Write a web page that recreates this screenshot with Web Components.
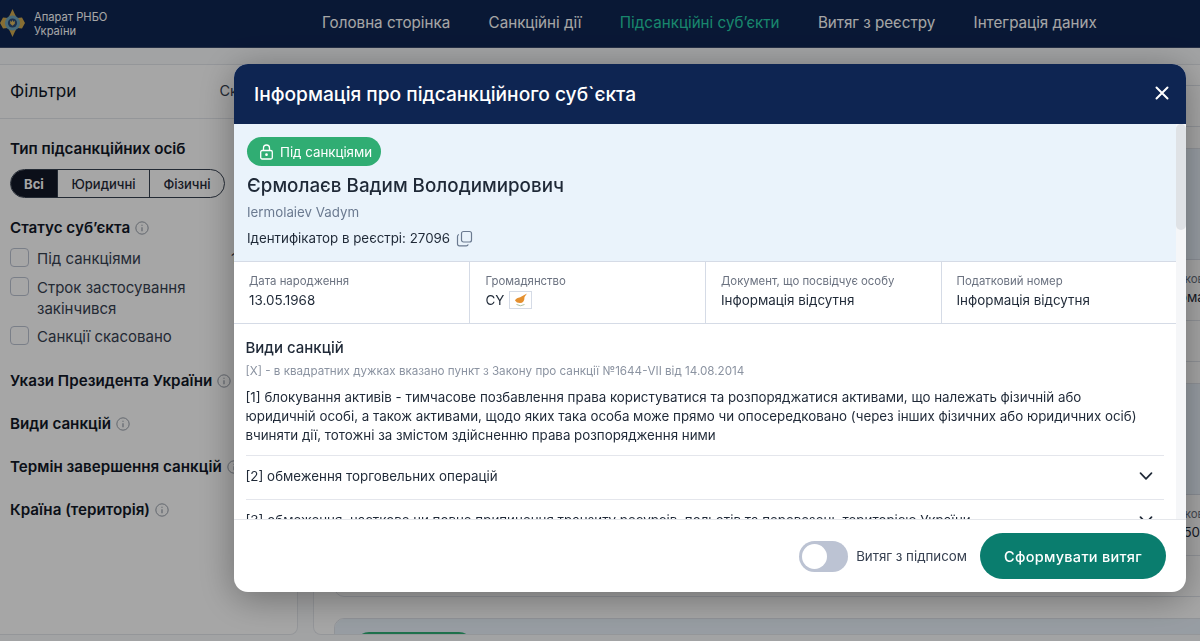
<!DOCTYPE html>
<html lang="uk"><head><meta charset="utf-8">
<style>
html,body{margin:0;height:641px;overflow:hidden;background:#f9fafc;font-family:Inter,"Noto Sans",sans-serif;color:#1f2937}
</style></head><body>
<app-header></app-header>
<app-page></app-page>
<dialog-overlay>
<subject-modal></subject-modal>
</dialog-overlay>
<script>
function def(name,html){customElements.define(name,class extends HTMLElement{constructor(){super();this.attachShadow({mode:'open'}).innerHTML=html;}})}
const chev='<svg width="16" height="16" viewBox="0 0 16 16" fill="none" stroke="#1f2937" stroke-width="1.7" stroke-linecap="round" stroke-linejoin="round"><path d="M2.5 5.2 8 10.8l5.5-5.6"/></svg>';
const info='<svg width="14" height="14" viewBox="0 0 15 15" fill="none" stroke="#8f97a3" style="margin-left:5px;flex:none"><circle cx="7.5" cy="7.5" r="6.6"/><path d="M7.5 6.6v4.4M7.5 4v1.2" stroke-width="1.2"/></svg>';

def('app-header',`<style>
:host{display:flex;align-items:center;height:48px;background:#0e2552;box-sizing:border-box;border-bottom:1px solid #3a4a6c}
.logo{display:flex;align-items:center;width:322px;box-sizing:border-box;gap:9px;flex:none}
.t{font-size:11.2px;line-height:14px;color:#fff;white-space:nowrap}
nav{display:flex;gap:38.3px;font-size:15.2px;color:#fff;white-space:nowrap;margin-top:-2px}
.a{color:#26d0a8}
svg{flex:none;margin-top:-2px}
</style>
<div class="logo"><svg width="25" height="28" viewBox="0 0 25 28">
<path d="M12.500 0 15 5.500 17 9l5-.5L25 14l-3 5.500-5-.5-2 3.500L12.500 28 10 22.500 8 19l-5 .5L0 14l3-5.500L8 9l2-3.500z" fill="#d0a94f"/>
<circle cx="12.500" cy="14" r="7.600" fill="#6ea5bd"/><circle cx="12.500" cy="14" r="4.600" fill="#2a4a78"/>
<path d="M10.200 11.500v3.200l2.300 2 2.300-2v-3.200l-1.300 1.500-1-2-1 2z" fill="#e0bb60"/></svg>
<div class="t">Апарат РНБО<br>України</div></div>
<nav><span>Головна сторінка</span><span>Санкційні дії</span><span class="a">Підсанкційні суб’єкти</span><span>Витяг з реєстру</span><span>Інтеграція даних</span></nav>`);

def('filter-title',`<style>:host{display:flex;align-items:center;font-size:15.2px;line-height:18px;font-weight:600;color:#111827;white-space:nowrap}</style><slot></slot>`);
def('check-row',`<style>:host{display:flex;gap:8px;font-size:15px;line-height:21px;color:#374151}
i{width:19px;height:19px;box-sizing:border-box;border:1.5px solid #bcc3d2;border-radius:4px;flex:none;background:#fff}
.n{margin-left:auto;margin-right:50px}</style><i></i><span><slot></slot></span><span class="n"><slot name="n"></slot></span>`);
def('type-switch',`<style>:host{display:flex;height:29px;width:215px;box-sizing:border-box;border:1px solid #374151;border-radius:15px;overflow:hidden;font-size:13px;font-weight:500;color:#1f2937}
span{display:flex;align-items:center;justify-content:center;border-left:1px solid #374151;white-space:nowrap}
.on{background:#111827;color:#fff;font-weight:700;border:0;width:46px;flex:none}.m{width:91px;flex:none}.e{flex:1}</style>
<span class="on">Всі</span><span class="m">Юридичні</span><span class="e">Фізичні</span>`);

def('filter-side',`<style>
:host{display:block;width:298px;height:571px;flex:none;box-sizing:border-box;background:#fff;border:1px solid #e4e7ec;border-left:0;border-radius:0 8px 8px 0;overflow:hidden}
.h{display:flex;justify-content:space-between;align-items:center;height:54px;padding:0 10px 2px;box-sizing:border-box;border-bottom:1px solid #e4e7ec;font-size:17.2px;white-space:nowrap}
.h b{font-weight:400;color:#111827}.h span{font-size:14.5px;color:#374151;margin-right:8px}
.b{padding:0 10px;display:flex;flex-direction:column}
.l{display:flex;flex-direction:column}
</style>
<div class="h"><b>Фільтри</b><span>Скинути</span></div>
<div class="b">
<filter-title style="margin-top:21px">Тип підсанкційних осіб</filter-title>
<type-switch style="margin-top:11px"></type-switch>
<filter-title style="margin-top:21px">Статус суб’єкта ${info}</filter-title>
<div class="l" style="gap:7.5px;margin-top:11px">
<check-row>Під санкціями<span slot="n">1</span></check-row>
<check-row>Строк застосування<br>закінчився</check-row>
<check-row>Санкції скасовано</check-row></div>
<filter-title style="margin-top:25px">Укази Президента України ${info}</filter-title>
<filter-title style="margin-top:25px">Види санкцій ${info}</filter-title>
<filter-title style="margin-top:25px">Термін завершення санкцій ${info}</filter-title>
<filter-title style="margin-top:25px">Країна (територія) ${info}</filter-title>
</div>`);

def('result-card',`<style>:host{display:block;width:1000px;height:214px;flex:none;background:#fff;border:1px solid #dfe3ea;border-radius:10px;box-sizing:border-box;overflow:hidden;font-size:13.4px;color:#1f2937}
.hero{height:111px;box-sizing:border-box;background:#e9f2fb;border-bottom:1px solid #d5dbe6;padding:13px 20px}
.cells{height:61px;box-sizing:border-box;border-bottom:1px solid #dfe3ea;padding:12px 0 0 815px}
.l{font-size:11.5px;line-height:14px;color:#6b7280;white-space:nowrap}.v{line-height:18px;margin-top:2px;white-space:nowrap}
::slotted([slot=pill]){display:block;width:118px;height:28px;background:#2fae74;border-radius:14px}
</style><div class="hero"><slot name="pill"></slot></div>
<div class="cells"><div class="l"><slot name="label"></slot></div><div class="v"><slot></slot></div></div>`);
def('app-page',`<style>
:host{display:flex;gap:15px;padding-top:16px;height:593px;box-sizing:border-box;overflow:hidden}
.m{flex:1;background:#fff;border:1px solid #e4e7ec;border-right:0;border-radius:8px 0 0 8px;padding-left:20px;box-sizing:border-box;min-width:0;height:571px;overflow:hidden}
.list{display:flex;flex-direction:column;gap:21px;margin-top:-152px}
</style>
<filter-side></filter-side>
<div class="m"><div class="list">
<result-card></result-card>
<result-card><span slot="label">Податковий номер</span>Інформація відсутня</result-card>
<result-card><span slot="label">Податковий номер</span>2984507123</result-card>
<result-card><span slot="pill"></span></result-card>
</div></div>`);

def('dialog-overlay',`<style>:host{position:fixed;inset:0;background:rgba(0,0,0,.35);display:block}</style><slot></slot>`);

def('info-cell',`<style>:host{display:block;flex:1;padding:12px 15px 0;box-sizing:border-box;min-width:0;border-left:1px solid #d5dbe6}
:host(:first-child){border-left:0}
.l{font-size:11.4px;line-height:14px;color:#6b7280;white-space:nowrap}.v{font-size:13.4px;line-height:18px;margin-top:3px;color:#1f2937;display:flex;align-items:center;gap:5px;white-space:nowrap}</style>
<div class="l"><slot name="l"></slot></div><div class="v"><slot></slot></div>`);
def('sanction-row',`<style>:host{display:flex;justify-content:space-between;align-items:center;height:44px;box-sizing:border-box;padding:0 10px 4px 0;border-top:1.5px solid #e4e6ec;font-size:13.35px;color:#1f2937;white-space:nowrap;overflow:hidden}</style><span><slot></slot></span>${chev}`);

def('subject-modal',`<style>
:host{position:absolute;left:234px;top:64px;width:952px;height:528px;background:#fff;border-radius:14px;overflow:hidden;display:flex;flex-direction:column;box-shadow:0 6px 36px rgba(0,0,0,.35)}
header{height:60px;flex:none;background:#0e2552;color:#fff;display:flex;align-items:center;justify-content:space-between;padding:0 17px 0 20px;font-size:19.15px;font-weight:500}
header svg{display:block;margin-top:-3px}
.scroll{flex:1;min-height:0;overflow:hidden;position:relative;padding-right:10px;border-bottom:1px solid #e5e7eb}
.bar{position:absolute;right:0;top:0;bottom:0;width:10px;background:#f5f6f8}
.bar i{display:block;height:106px;background:#dfe2e6;border-radius:5px}
.hero{background:#eaf3fb;height:138px;box-sizing:border-box;padding:13px 13px 0;border-bottom:1px solid #d5dbe6}
.pill{display:inline-flex;align-items:center;gap:7px;height:29px;padding:0 9px 0 13px;border-radius:15px;background:#30ad73;color:#fff;font-size:13.3px;box-sizing:border-box;vertical-align:top}
h2{margin:7px 0 0;font-size:18.8px;line-height:26px;font-weight:500;color:#1f2937}
.lat{font-size:13.3px;line-height:16px;color:#6b7a90;margin-top:5px}
.id{display:flex;align-items:center;gap:6px;font-size:13.33px;line-height:18px;color:#1f2937;margin-top:9px}
.cells{display:flex;height:62px;box-sizing:border-box;border-bottom:1px solid #d5dbe6}
.sec{padding:14px 12px 0 11.5px}
h3{margin:0;font-size:15px;line-height:20px;font-weight:500;color:#1f2937}
.note{font-size:11.65px;line-height:14px;color:#8b93a1;margin-top:6px;white-space:nowrap}
p{margin:10px 14px 10px 0;font-size:13.33px;line-height:19px;color:#1f2937}
footer{height:72px;flex:none;display:flex;align-items:center;justify-content:flex-end;padding:0 20px 0 0;font-size:13.3px;color:#374151}
.tg{width:49px;height:31px;border-radius:16px;background:#bcc3d3;position:relative;margin-right:8px}
.tg i{position:absolute;left:3px;top:3px;width:25px;height:25px;border-radius:50%;background:#fff}
.btn{display:flex;align-items:center;justify-content:center;width:186px;height:46px;border-radius:23px;background:#0a7d6e;color:#fff;font-size:14.5px;font-weight:500;margin-left:13px;letter-spacing:.3px}
</style>
<header><span>Інформація про підсанкційного суб\`єкта</span><svg width="14" height="14" viewBox="0 0 14 14" stroke="#fff" stroke-width="2" stroke-linecap="round"><path d="M1.500 1.500l11 11M12.500 1.500l-11 11"/></svg></header>
<div class="scroll">
<div class="hero">
<span class="pill"><svg width="13" height="16" viewBox="0 0 13 16" fill="none" stroke="#fff" stroke-width="1.300"><rect x=".7" y="6.500" width="11.600" height="8.500" rx="1.500"/><path d="M3.500 6.500V4a3 3 0 0 1 6 0v2.500"/><circle cx="6.500" cy="10.700" r=".7" fill="#fff"/></svg>Під санкціями</span>
<h2>Єрмолаєв Вадим Володимирович</h2>
<div class="lat">Iermolaiev Vadym</div>
<div class="id">Ідентифікатор в реєстрі: 27096 <svg width="17" height="17" viewBox="0 0 17 17" fill="none" stroke="#6b7a90" stroke-width="1.200"><rect x="5.500" y="1.500" width="10" height="10.500" rx="2"/><path d="M3 4.500A2 2 0 0 0 1.500 6.500v7.500a1.800 1.800 0 0 0 1.800 1.800h7a2 2 0 0 0 1.900-1.500"/></svg></div>
</div>
<div class="cells">
<info-cell><span slot="l">Дата народження</span>13.05.1968</info-cell>
<info-cell style="padding-left:16px"><span slot="l">Громадянство</span>CY <svg width="23" height="18" viewBox="0 0 23 18"><rect x=".5" y=".5" width="22" height="17" fill="#fff" stroke="#d5dbe6"/><path d="M6 9.500C7 7 10 7 12 5.800L18 2.500 15.500 6C15.500 10 14 12 11 12L8 11.500z" fill="#e5902f"/><path d="M7.500 13.500q4 2.500 8 0" fill="none" stroke="#9ab08c" stroke-width=".8"/></svg></info-cell>
<info-cell><span slot="l">Документ, що посвідчує особу</span>Інформація відсутня</info-cell>
<info-cell><span slot="l">Податковий номер</span>Інформація відсутня</info-cell>
</div>
<div class="sec">
<h3>Види санкцій</h3>
<div class="note">[X] - в квадратних дужках вказано пункт з Закону про санкції №1644-VII від 14.08.2014</div>
<p>[1] блокування активів - тимчасове позбавлення права користуватися та розпоряджатися активами, що належать фізичній або юридичній особі, а також активами, щодо яких така особа може прямо чи опосередковано (через інших фізичних або юридичних осіб) вчиняти дії, тотожні за змістом здійсненню права розпорядження ними</p>
<sanction-row>[2] обмеження торговельних операцій</sanction-row>
<sanction-row>[3] обмеження, часткове чи повне припинення транзиту ресурсів, польотів та перевезень територією України</sanction-row>
</div>
<div class="bar"><i></i></div>
</div>
<footer><div class="tg"><i></i></div>Витяг з підписом<div class="btn">Сформувати витяг</div></footer>`);
</script>
</body></html>
